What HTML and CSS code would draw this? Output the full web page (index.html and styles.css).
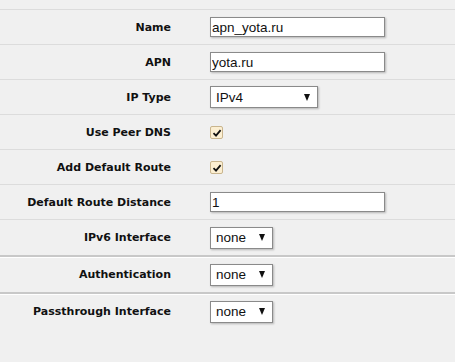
FILE: index.html
```html
<!DOCTYPE html>
<html lang="en">
<head>
  <meta charset="UTF-8">
  <title>Interface settings</title>
  <link rel="stylesheet" href="styles.css">
</head>
<body>
  <div class="settings">
    <div class="section">
      <div class="row">
        <label class="row-label">Name</label>
        <div class="row-field"><input class="text-input" type="text" value="apn_yota.ru"></div>
      </div>
      <div class="row">
        <label class="row-label">APN</label>
        <div class="row-field"><input class="text-input" type="text" value="yota.ru"></div>
      </div>
      <div class="row">
        <label class="row-label">IP Type</label>
        <div class="row-field">
          <div class="select select-wide">IPv4<svg class="arrow" viewBox="0 0 7 8"><path d="M0 0H7L3.5 8Z"/></svg></div>
        </div>
      </div>
      <div class="row">
        <label class="row-label">Use Peer DNS</label>
        <div class="row-field">
          <span class="check"><svg viewBox="0 0 10 10"><path d="M1.5 5.2L4 7.6L8.6 2.2"/></svg></span>
        </div>
      </div>
      <div class="row">
        <label class="row-label">Add Default Route</label>
        <div class="row-field">
          <span class="check"><svg viewBox="0 0 10 10"><path d="M1.5 5.2L4 7.6L8.6 2.2"/></svg></span>
        </div>
      </div>
      <div class="row">
        <label class="row-label">Default Route Distance</label>
        <div class="row-field"><input class="text-input" type="text" value="1"></div>
      </div>
      <div class="row">
        <label class="row-label">IPv6 Interface</label>
        <div class="row-field">
          <div class="select">none<svg class="arrow" viewBox="0 0 7 8"><path d="M0 0H7L3.5 8Z"/></svg></div>
        </div>
      </div>
    </div>

    <div class="section">
      <div class="row">
        <label class="row-label">Authentication</label>
        <div class="row-field">
          <div class="select">none<svg class="arrow" viewBox="0 0 7 8"><path d="M0 0H7L3.5 8Z"/></svg></div>
        </div>
      </div>
    </div>

    <div class="section">
      <div class="row">
        <label class="row-label">Passthrough Interface</label>
        <div class="row-field">
          <div class="select">none<svg class="arrow" viewBox="0 0 7 8"><path d="M0 0H7L3.5 8Z"/></svg></div>
        </div>
      </div>
    </div>
  </div>
</body>
</html>
```

FILE: styles.css
```css
* {
  margin: 0;
  padding: 0;
  box-sizing: border-box;
}

body {
  background: #f0f0f0;
  font-family: "DejaVu Sans", Verdana, sans-serif;
  color: #111;
  padding-top: 9px;
}

.section {
  border-top: 2px solid #c8c8c8;
  box-shadow: inset 0 1px 0 #fff;
}

.section:first-child {
  border-top: 1px solid #dcdcdc;
  box-shadow: none;
}

.row {
  display: grid;
  grid-template-columns: 171px 1fr;
  column-gap: 39px;
  align-items: center;
  height: 35px;
  border-bottom: 1px solid #dcdcdc;
}

.section .row:last-child {
  border-bottom: none;
}

.row-label {
  text-align: right;
  font-weight: bold;
  font-size: 11px;
}

.text-input {
  width: 175px;
  height: 20px;
  border: 1px solid #8a8a8a;
  box-shadow: 1px 1px 2px rgba(0, 0, 0, 0.25);
  background: #fff;
  font-family: "Liberation Sans", Arial, sans-serif;
  font-size: 13.5px;
  padding: 0 1px;
  color: #111;
  outline: none;
}

.select {
  display: flex;
  align-items: center;
  justify-content: space-between;
  width: 63px;
  height: 22px;
  border: 1px solid #8a8a8a;
  box-shadow: 1px 1px 2px rgba(0, 0, 0, 0.25);
  background: #fff;
  font-family: "Liberation Sans", Arial, sans-serif;
  font-size: 13.5px;
  padding: 0 7px 0 5px;
}

.select-wide {
  width: 108px;
}

.arrow {
  width: 6px;
  height: 7px;
  fill: #111;
}

.check {
  display: inline-flex;
  align-items: center;
  justify-content: center;
  width: 13px;
  height: 13px;
  border: 1px solid #c9b58e;
  border-radius: 2px;
  background: #fcefd2;
}

.check svg {
  width: 10px;
  height: 10px;
  fill: none;
  stroke: #111;
  stroke-width: 1.8;
}
```
